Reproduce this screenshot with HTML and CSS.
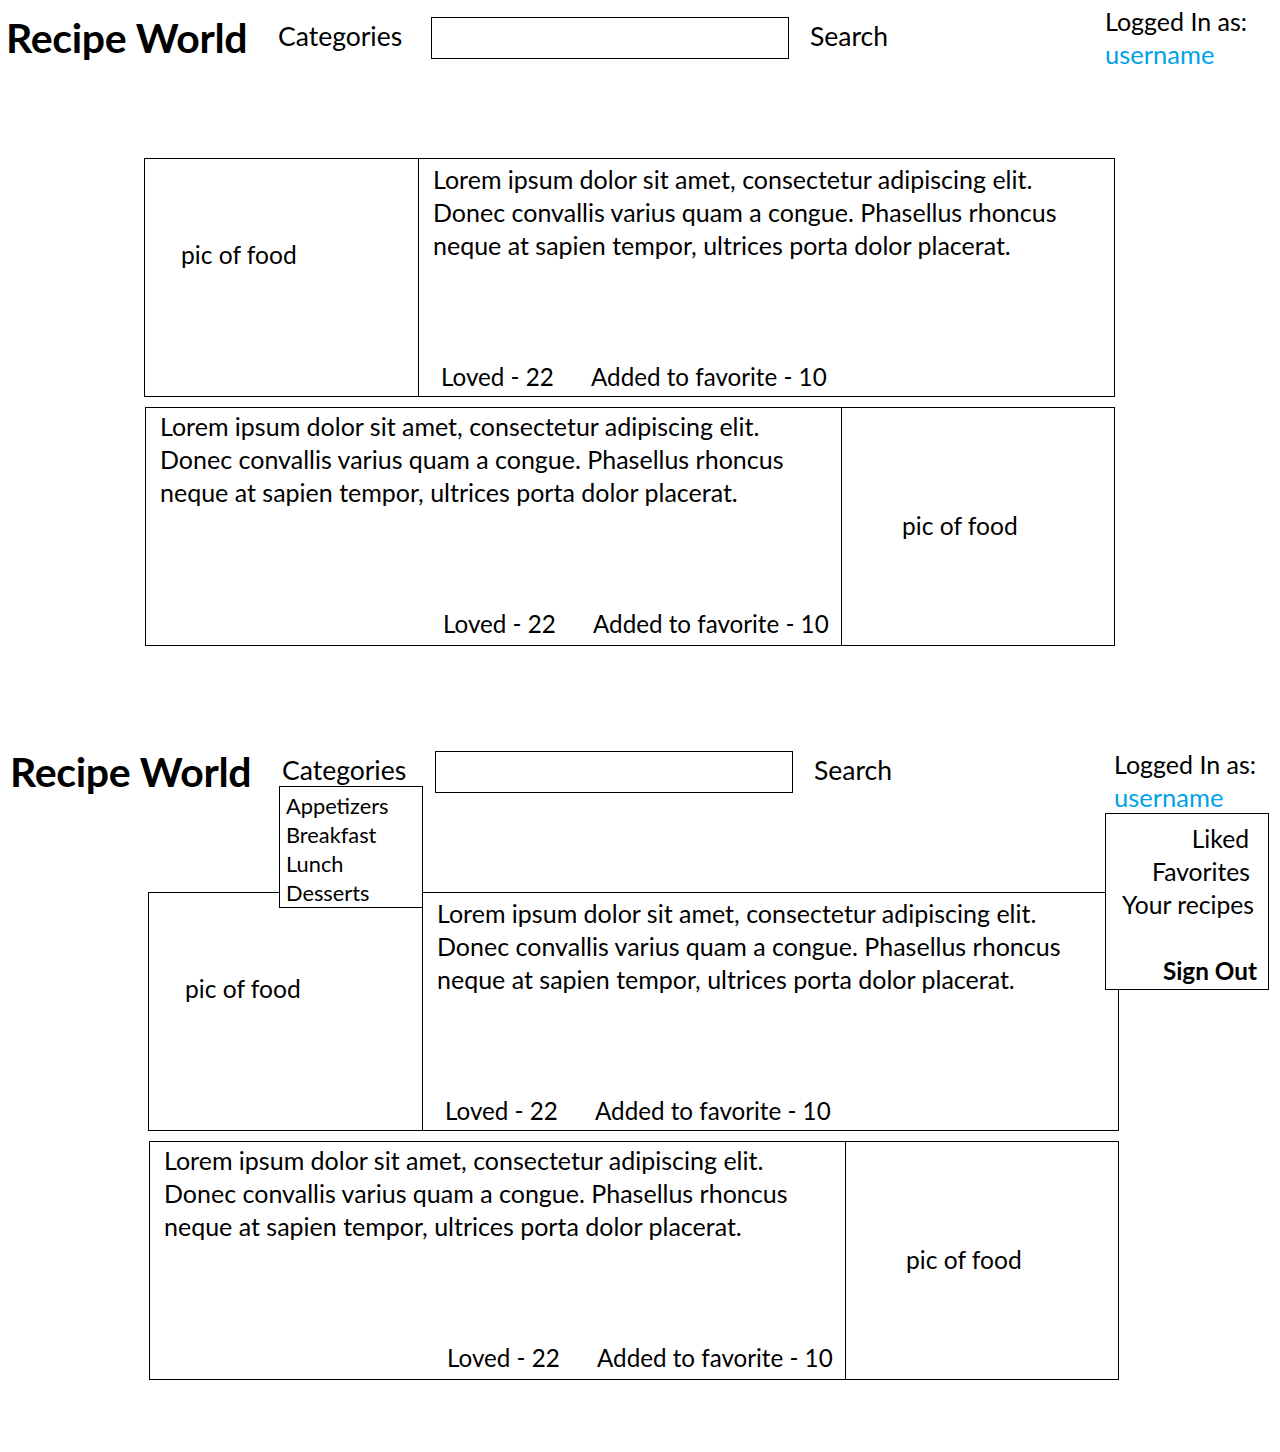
FILE: index.html
```html
<!DOCTYPE html>
<html>
<head>
<meta charset="utf-8">
<title>Recipe World</title>
<link rel="stylesheet" href="styles.css">
</head>
<body>
<section class="screen">
  <header class="topbar">
    <div class="brand">Recipe World</div>
    <div class="cats"><span class="cats-label">Categories</span></div>
    <div class="search-box"></div>
    <div class="search-label">Search</div>
    <div class="account">
      <div>Logged In as:</div>
      <div class="user">username</div>
    </div>
  </header>
  <div class="cards">
    <article class="card card--pic-left">
      <div class="pic">pic of food</div>
      <div class="body">
        <p class="desc">Lorem ipsum dolor sit amet, consectetur adipiscing elit.<br>Donec convallis varius quam a congue. Phasellus rhoncus<br>neque at sapien tempor, ultrices porta dolor placerat.</p>
        <div class="stats"><span class="loved">Loved - 22</span><span>Added to favorite - 10</span></div>
      </div>
    </article>
    <article class="card card--pic-right">
      <div class="body">
        <p class="desc">Lorem ipsum dolor sit amet, consectetur adipiscing elit.<br>Donec convallis varius quam a congue. Phasellus rhoncus<br>neque at sapien tempor, ultrices porta dolor placerat.</p>
        <div class="stats"><span class="loved">Loved - 22</span><span>Added to favorite - 10</span></div>
      </div>
      <div class="pic">pic of food</div>
    </article>
  </div>
</section>

<section class="screen screen--open">
  <header class="topbar">
    <div class="brand">Recipe World</div>
    <div class="cats">
      <span class="cats-label">Categories</span>
      <ul class="dropdown">
        <li>Appetizers</li>
        <li>Breakfast</li>
        <li>Lunch</li>
        <li>Desserts</li>
      </ul>
    </div>
    <div class="search-box"></div>
    <div class="search-label">Search</div>
    <div class="account account--open">
      <div>Logged In as:</div>
      <div class="user">username</div>
      <ul class="menu">
        <li class="menu-liked">Liked</li>
        <li class="menu-fav">Favorites</li>
        <li class="menu-yours">Your recipes</li>
        <li class="menu-gap">&nbsp;</li>
        <li class="menu-out">Sign Out</li>
      </ul>
    </div>
  </header>
  <div class="cards">
    <article class="card card--pic-left">
      <div class="pic">pic of food</div>
      <div class="body">
        <p class="desc">Lorem ipsum dolor sit amet, consectetur adipiscing elit.<br>Donec convallis varius quam a congue. Phasellus rhoncus<br>neque at sapien tempor, ultrices porta dolor placerat.</p>
        <div class="stats"><span class="loved">Loved - 22</span><span>Added to favorite - 10</span></div>
      </div>
    </article>
    <article class="card card--pic-right">
      <div class="body">
        <p class="desc">Lorem ipsum dolor sit amet, consectetur adipiscing elit.<br>Donec convallis varius quam a congue. Phasellus rhoncus<br>neque at sapien tempor, ultrices porta dolor placerat.</p>
        <div class="stats"><span class="loved">Loved - 22</span><span>Added to favorite - 10</span></div>
      </div>
      <div class="pic">pic of food</div>
    </article>
  </div>
</section>
</body>
</html>
```
FILE: styles.css
```css
* { box-sizing: border-box; }
html, body { margin: 0; padding: 0; background: #fff; }
body {
  font-family: Lato, "Liberation Sans", sans-serif;
  font-size: 25px;
  line-height: 33px;
  color: #000;
  width: 1280px;
}
ul { list-style: none; margin: 0; padding: 0; }
p { margin: 0; }

.screen { height: 734px; position: relative; }
.screen--open { padding-left: 4px; }

.topbar {
  display: flex;
  align-items: flex-start;
  height: 100px;
  padding-left: 6px;
}
.brand {
  flex: none;
  width: 272px;
  margin-top: 13px;
  font-size: 41px;
  line-height: 50px;
  font-weight: 700;
  letter-spacing: -0.3px;
}
.cats {
  flex: none;
  width: 153px;
  margin-top: 20px;
  position: relative;
}
.cats-label { font-size: 26.5px; }
.search-box {
  flex: none;
  width: 358px;
  height: 42px;
  margin-top: 17px;
  margin-right: 21px;
  border: 1px solid #000;
}
.search-label {
  flex: none;
  width: 295px;
  margin-top: 20px;
  font-size: 26.5px;
}
.account {
  flex: none;
  margin-top: 5px;
  font-size: 25px;
  position: relative;
}
.account--open { margin-top: 14px; margin-left: 5px; }
.user { color: #00a2e8; font-size: 25.5px; }

.dropdown {
  position: absolute;
  left: -3px;
  top: 32px;
  width: 144px;
  padding: 4px 0 0 6px;
  border: 1px solid #000;
  background: #fff;
  font-size: 21.8px;
  line-height: 29px;
  z-index: 2;
}

.menu {
  position: absolute;
  left: -9px;
  top: 65px;
  width: 164px;
  height: 177px;
  padding-top: 8px;
  border: 1px solid #000;
  background: #fff;
  text-align: right;
  font-size: 24.7px;
  z-index: 2;
}
.menu li { padding-right: 19px; }
.menu .menu-fav { padding-right: 18px; }
.menu .menu-yours { padding-right: 14px; }
.menu .menu-out { padding-right: 11px; font-weight: 700; font-size: 24.3px; }

.cards {
  margin-top: 58px;
  margin-left: 144px;
  width: 971px;
}
.card {
  display: grid;
  height: 239px;
  border: 1px solid #000;
}
.card--pic-left { grid-template-columns: 273px 1fr; }
.card--pic-right {
  grid-template-columns: 1fr 273px;
  margin-top: 10px;
  margin-left: 1px;
}
.body {
  display: flex;
  flex-direction: column;
  padding-left: 14px;
}
.desc { font-size: 25px; }
.stats { margin-top: auto; display: flex; font-size: 24.2px; }
.loved { flex: none; width: 150px; }
.pic { font-size: 24.6px; }

.card--pic-left .pic { padding: 79px 0 0 36px; }
.card--pic-left .body {
  border-left: 1px solid #000;
  padding-top: 4px;
  padding-bottom: 3px;
}
.card--pic-left .stats { padding-left: 8px; }

.card--pic-right .body {
  padding-top: 2px;
  padding-bottom: 5px;
}
.card--pic-right .stats { padding-left: 283px; }
.card--pic-right .pic {
  border-left: 1px solid #000;
  padding: 101px 0 0 60px;
}
```
